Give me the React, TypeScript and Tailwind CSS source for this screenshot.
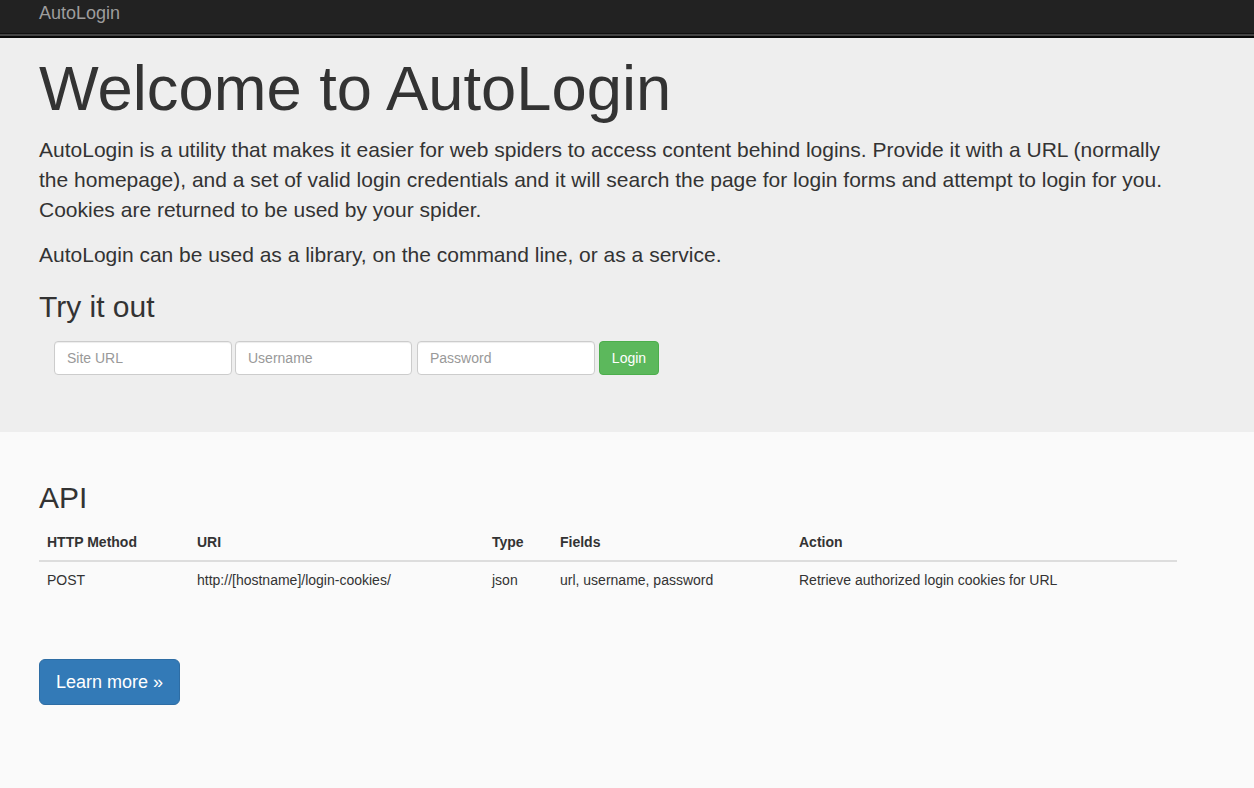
export default function App() {
  const font = { fontFamily: '"Liberation Sans", Arial, sans-serif' };
  return (
    <div className="min-h-[788px] bg-[#fafafa] text-[#333]" style={font}>
      <nav className="bg-[#222]">
        <div className="h-[33px] pl-[39px] flex items-center">
          <span className="text-[18px] leading-[20px] text-[#9d9d9d] -mt-[7px]">AutoLogin</span>
        </div>
        <div className="h-px bg-[#111]" />
        <div className="h-[2px] bg-[#444]" />
        <div className="h-[2px] bg-[#080808]" />
      </nav>
      <section className="bg-[#eee] pt-[16px] pb-[57px]">
        <div className="px-[39px] w-[1218px]">
          <h1 className="text-[63.3px] leading-[69px] font-normal">Welcome to AutoLogin</h1>
          <p className="mt-[12px] text-[21px] leading-[30px] w-[1140px]">
            AutoLogin is a utility that makes it easier for web spiders to access content behind logins. Provide it with a URL (normally the homepage), and a set of valid login credentials and it will search the page for login forms and attempt to login for you. Cookies are returned to be used by your spider.
          </p>
          <p className="mt-[15px] text-[21px] leading-[30px]">
            AutoLogin can be used as a library, on the command line, or as a service.
          </p>
          <h2 className="mt-[20px] text-[30px] leading-[33px] font-normal">Try it out</h2>
          <form className="mt-[18px] ml-[15px] flex items-center" onSubmit={(e) => e.preventDefault()}>
            <input
              placeholder="Site URL"
              className="w-[178px] h-[34px] px-[12px] text-[14px] bg-white border border-[#ccc] rounded-[4px] shadow-[inset_0_1px_1px_rgba(0,0,0,0.075)] placeholder:text-[#999] outline-none"
            />
            <input
              placeholder="Username"
              className="ml-[3px] w-[177px] h-[34px] px-[12px] text-[14px] bg-white border border-[#ccc] rounded-[4px] shadow-[inset_0_1px_1px_rgba(0,0,0,0.075)] placeholder:text-[#999] outline-none"
            />
            <input
              placeholder="Password"
              type="password"
              className="ml-[5px] w-[178px] h-[34px] px-[12px] text-[14px] bg-white border border-[#ccc] rounded-[4px] shadow-[inset_0_1px_1px_rgba(0,0,0,0.075)] placeholder:text-[#999] outline-none"
            />
            <button
              type="submit"
              className="ml-[4px] w-[60px] h-[34px] text-[14px] text-white bg-[#5cb85c] border border-[#4cae4c] rounded-[4px]"
            >
              Login
            </button>
          </form>
        </div>
      </section>
      <section className="px-[39px] pt-[49px]">
        <h2 className="text-[30px] leading-[33px] font-normal">API</h2>
        <table className="mt-[10px] w-[1138px] table-fixed border-collapse text-[14px] leading-[20px]">
          <colgroup>
            <col className="w-[150px]" />
            <col className="w-[295px]" />
            <col className="w-[68px]" />
            <col className="w-[239px]" />
            <col />
          </colgroup>
          <thead>
            <tr className="border-b-2 border-[#ddd]">
              <th className="text-left font-bold px-[8px] py-[8px]">HTTP Method</th>
              <th className="text-left font-bold px-[8px] py-[8px]">URI</th>
              <th className="text-left font-bold px-[8px] py-[8px]">Type</th>
              <th className="text-left font-bold px-[8px] py-[8px]">Fields</th>
              <th className="text-left font-bold px-[8px] py-[8px]">Action</th>
            </tr>
          </thead>
          <tbody>
            <tr>
              <td className="px-[8px] py-[8px]">POST</td>
              <td className="px-[8px] py-[8px]">http://[hostname]/login-cookies/</td>
              <td className="px-[8px] py-[8px]">json</td>
              <td className="px-[8px] py-[8px]">url, username, password</td>
              <td className="px-[8px] py-[8px]">Retrieve authorized login cookies for URL</td>
            </tr>
          </tbody>
        </table>
        <button className="mt-[61px] h-[46px] px-[16px] text-[18px] leading-[24px] text-white bg-[#337ab7] border border-[#2e6da4] rounded-[6px]">
          Learn more »
        </button>
      </section>
    </div>
  );
}
